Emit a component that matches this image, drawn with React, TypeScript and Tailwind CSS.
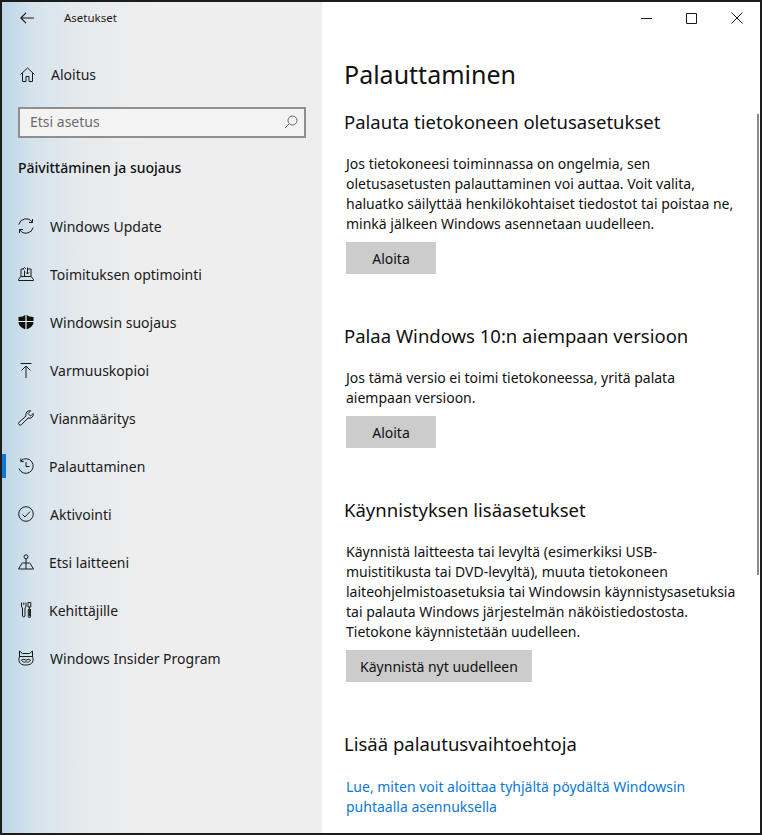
import React from "react";

const s = { fill: "none", stroke: "#1a1a1a", strokeWidth: 1 } as const;

function Ic({ children }: { children: React.ReactNode }) {
  return <svg width="16" height="16" viewBox="0 0 16 16" {...s}>{children}</svg>;
}

const items: [string, React.ReactNode, boolean][] = [
  ["Windows Update", <Ic><path d="M.8 6.500A7.400 7.400 0 0 1 14.200 4.200M14.500 1v3.500H11M15.200 9.500A7.400 7.400 0 0 1 1.800 11.800M1.500 15v-3.500H5" /></Ic>, false],
  ["Toimituksen optimointi", <Ic><path d="M3 10.500V3h3M13 10.500V3h-3M6.500 10.500V4.500M5 3 6.500 1.500 8 3M9.500 1.500V8M8 6.500l1.500 1.500L11 6.500M2.800 10.500h10.400L15.500 13.500v1H.5v-1z" /></Ic>, false],
  ["Windowsin suojaus", <svg width="16" height="16" viewBox="0 0 16 16"><path fill="#111" d="M8 .5c2 1.700 4.500 2.500 7.500 2.500v5c0 3.500-3 6-7.500 7.500C3.500 14 .5 11.500.5 8V3c3 0 5.500-.8 7.500-2.500z" /><path stroke="#eef2f5" strokeWidth="1.200" d="M8 0v16M0 7.500h16" /></svg>, false],
  ["Varmuuskopioi", <Ic><path d="M2.500 1.500h11M8 16V4M3.500 8.500 8 4l4.500 4.500" /></Ic>, false],
  ["Vianmääritys", <Ic><path d="M15.300 3.500a4 4 0 0 1-5.300 4.500L3.500 14.700a1.700 1.700 0 0 1-2.400-.1 1.700 1.700 0 0 1 0-2.400L8 6a4 4 0 0 1 4.700-5.200L10 3.500 12.500 6z" /></Ic>, false],
  ["Palauttaminen", <Ic><path d="M2.800 2.800A7.300 7.300 0 1 1 1 10.500M2.800.5v3h3M8 4v4.500h3.500" /></Ic>, true],
  ["Aktivointi", <Ic><circle cx="8" cy="8" r="7.300" /><path d="m4.500 8.500 2.500 2.500 5-5.500" /></Ic>, false],
  ["Etsi laitteeni", <Ic><circle cx="8" cy="2.800" r="2" /><path d="M8 5v10M5 9h6M4.500 8.500.5 15h15l-4-6.500" /></Ic>, true],
  ["Kehittäjille", <Ic><path d="M3.500.5v3.500c0 1 .5 1.500 1 2v8a1.300 1.300 0 0 0 2.500 0V6c.5-.5 1-1 1-2V.5M5.800.5V3M10 .5h2.800v4.500H10zM11.400 5v9.500M10.300 7v7.500a1.100 1.100 0 0 0 2.200 0V7" /></Ic>, true],
  ["Windows Insider Program", <Ic><path d="M1.500 1l3 2.500h7l3-2.500v6c1 1 1 5-1 6.500-1.500 1-3.500 1.500-5.500 1.500S4 15 2.500 13.500c-2-1.500-2-5.500-1-6.500zM1.500 6.500h13M3.500 10c1.500-1 3.500-1 4.500.5 1-1.500 3-1.500 4.500-.5-1 2.500-3.500 2.500-4.500 1.500-1 1-3.500 1-4.500-1.500z" /></Ic>, false],
];

function Head({ children, cls }: { children: React.ReactNode; cls: string }) {
  return <h2 className={"text-[18.500px] leading-[26px] text-[#111] " + cls}>{children}</h2>;
}

function Btn({ children, w }: { children: React.ReactNode; w: string }) {
  return <div className={"h-8 bg-[#cccccc] flex items-center justify-center text-[14px] text-[#111] ml-[2px] " + w}>{children}</div>;
}

export default function App() {
  return (
    <div className="w-[762px] h-[835px] flex border-2 border-[#1c1c1c] bg-white overflow-hidden font-['Noto_Sans','Open_Sans',sans-serif]">
      <aside className="w-[320px] shrink-0 bg-[linear-gradient(90deg,#bcd6e8_0%,#d6e3ec_10%,#e6eaed_25%,#eeeeee_45%,#eeeeee_100%)] text-[#1a1a1a]">
        <div className="h-[32px] flex items-center pl-[18px]">
          <svg width="14" height="12" viewBox="0 0 14 12" {...s} strokeWidth={1.2}><path d="M14 6H1M6 .8.8 6 6 11.200" /></svg>
          <span className="ml-[30px] text-[11.500px]">Asetukset</span>
        </div>
        <div className="mt-[16px] h-[48px] flex items-center pl-[18px]">
          <svg width="15" height="15" viewBox="0 0 15 15" {...s}><path d="M.5 7.500 7.500 1l7 6.500M2.500 6v8.500h3.500V9.500h3v5h3.500V6" /></svg>
          <span className="ml-[16px] text-[14px]">Aloitus</span>
        </div>
        <div className="mt-[9px] ml-[16px] w-[288px] h-[31px] border-2 border-[#8f8f8f] bg-[#f3f3f3] flex items-center justify-between pl-[10px] pr-[6px] pb-[2px]">
          <span className="text-[14px] text-[#6b6b6b]">Etsi asetus</span>
          <svg width="14" height="14" viewBox="0 0 14 14" fill="none" stroke="#666" strokeWidth="1"><circle cx="8.500" cy="5.500" r="4.500" /><path d="M5.300 8.700 1 13" /></svg>
        </div>
        <div className="mt-[19px] ml-[16px] h-[22px] leading-[22px] text-[14px] font-medium text-[#111]">Päivittäminen ja suojaus</div>
        <nav className="mt-[23px]">
          {items.map(([label, icon, tight]) => (
            <div key={label} className="h-12 flex items-center relative">
              {label === "Palauttaminen" && <div className="absolute left-0 top-[12px] w-[4px] h-[24px] bg-[#0a78d4]" />}
              <span className="flex ml-[16px]">{icon}</span>
              <span className={tight ? "text-[14px] ml-[15px]" : "text-[14px] ml-[16px]"}>{label}</span>
            </div>
          ))}
        </nav>
      </aside>
      <main className="flex-1 relative text-[#111] pl-[22px]">
        <div className="flex justify-end items-center h-[32px] pr-[17px] gap-[34px]">
          <svg width="11" height="11" viewBox="0 0 11 11" {...s}><path d="M0 5.500h11" /></svg>
          <svg width="11" height="11" viewBox="0 0 11 11" {...s}><path d="M.5.500h10v10H.5z" /></svg>
          <svg width="12" height="12" viewBox="0 0 12 12" {...s}><path d="M.5.500l11 11M11.500.500l-11 11" /></svg>
        </div>
        <div className="absolute right-[1px] top-[112px] w-[2px] h-[461px] bg-[#8a8a8a]" />
        <h1 className="mt-[21px] text-[25px] leading-[38px] text-[#111]">Palauttaminen</h1>
        <Head cls="mt-[16px]">Palauta tietokoneen oletusasetukset</Head>
        <p className="mt-[19px] ml-[2px] w-[400px] text-[14px] leading-5">Jos tietokoneesi toiminnassa on ongelmia, sen<br />oletusasetusten palauttaminen voi auttaa. Voit valita,<br />haluatko säilyttää henkilökohtaiset tiedostot tai poistaa ne,<br />minkä jälkeen Windows asennetaan uudelleen.</p>
        <div className="mt-[8px]"><Btn w="w-[90px]">Aloita</Btn></div>
        <Head cls="mt-[49px]">Palaa Windows 10:n aiempaan versioon</Head>
        <p className="mt-[19px] ml-[2px] w-[400px] text-[14px] leading-5">Jos tämä versio ei toimi tietokoneessa, yritä palata<br />aiempaan versioon.</p>
        <div className="mt-[8px]"><Btn w="w-[90px]">Aloita</Btn></div>
        <Head cls="mt-[49px]">Käynnistyksen lisäasetukset</Head>
        <p className="mt-[19px] ml-[2px] w-[400px] text-[14px] leading-5">Käynnistä laitteesta tai levyltä (esimerkiksi USB-<br />muistitikusta tai DVD-levyltä), muuta tietokoneen<br />laiteohjelmistoasetuksia tai Windowsin käynnistysasetuksia<br />tai palauta Windows järjestelmän näköistiedostosta.<br />Tietokone käynnistetään uudelleen.</p>
        <div className="mt-[8px]"><Btn w="w-[186px]">Käynnistä nyt uudelleen</Btn></div>
        <Head cls="mt-[49px]">Lisää palautusvaihtoehtoja</Head>
        <p className="mt-[20px] ml-[2px] w-[400px] text-[14px] leading-5 text-[#0a78d4]">Lue, miten voit aloittaa tyhjältä pöydältä Windowsin<br />puhtaalla asennuksella</p>
      </main>
    </div>
  );
}
